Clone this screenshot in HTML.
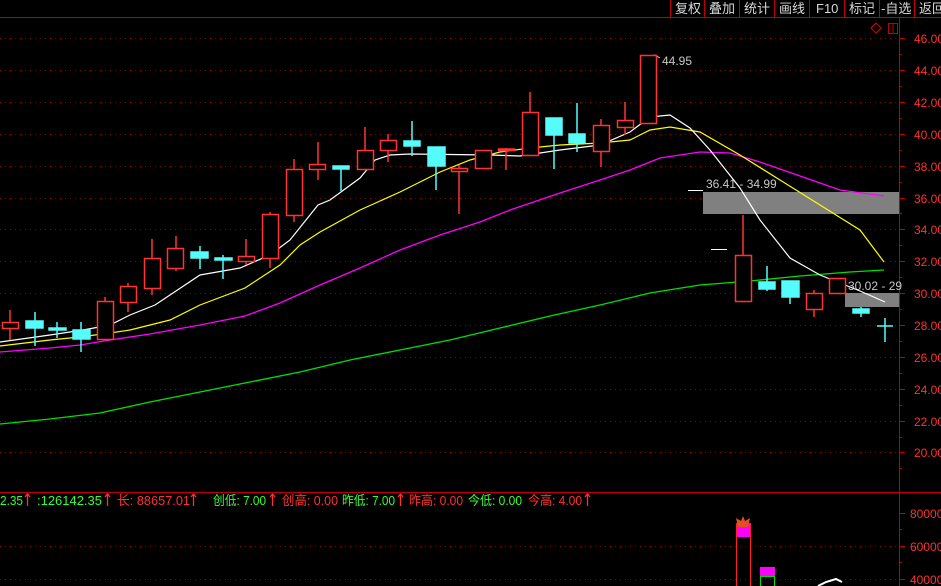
<!DOCTYPE html>
<html><head><meta charset="utf-8"><style>
body{margin:0;background:#000;width:941px;height:586px;overflow:hidden;font-family:"Liberation Sans","Noto Sans CJK SC",sans-serif}
svg{position:absolute;left:0;top:0}
text{font-family:"Liberation Sans","Noto Sans CJK SC",sans-serif}
</style></head><body>
<svg width="941" height="586" viewBox="0 0 941 586">
<line x1="0" y1="17.5" x2="941" y2="17.5" stroke="#c00000"/>
<g stroke="#c00000">
<line x1="670.5" y1="0" x2="670.5" y2="17"/><line x1="704.5" y1="0" x2="704.5" y2="17"/><line x1="739.5" y1="0" x2="739.5" y2="17"/><line x1="774.5" y1="0" x2="774.5" y2="17"/><line x1="809.5" y1="0" x2="809.5" y2="17"/><line x1="844.5" y1="0" x2="844.5" y2="17"/><line x1="879.5" y1="0" x2="879.5" y2="17"/><line x1="914.5" y1="0" x2="914.5" y2="17"/>
</g>
<g fill="#d8d8d8" font-size="13">
<text x="675" y="13">复权</text><text x="709" y="13">叠加</text><text x="744" y="13">统计</text><text x="779" y="13">画线</text><text x="816" y="13">F10</text><text x="849" y="13">标记</text><text x="881" y="13">-自选</text><text x="919" y="13">返回</text>
</g>
<polygon points="876,23 881,28 876,33 871,28" fill="none" stroke="#e00000"/>
<rect x="888.5" y="23.5" width="9" height="10" fill="none" stroke="#c00000"/><line x1="893" y1="23" x2="893" y2="34" stroke="#c00000"/>
<g stroke="#900000" stroke-dasharray="1,4">
<line x1="0" y1="38.5" x2="899" y2="38.5"/><line x1="0" y1="70.5" x2="899" y2="70.5"/><line x1="0" y1="102.5" x2="899" y2="102.5"/><line x1="0" y1="134.5" x2="899" y2="134.5"/><line x1="0" y1="166.5" x2="899" y2="166.5"/><line x1="0" y1="198.5" x2="899" y2="198.5"/><line x1="0" y1="229.5" x2="899" y2="229.5"/><line x1="0" y1="261.5" x2="899" y2="261.5"/><line x1="0" y1="293.5" x2="899" y2="293.5"/><line x1="0" y1="325.5" x2="899" y2="325.5"/><line x1="0" y1="357.5" x2="899" y2="357.5"/><line x1="0" y1="389.5" x2="899" y2="389.5"/><line x1="0" y1="421.5" x2="899" y2="421.5"/><line x1="0" y1="452.5" x2="899" y2="452.5"/>
<line x1="0" y1="546.5" x2="899" y2="546.5"/><line x1="0" y1="579.5" x2="899" y2="579.5"/>
</g>
<line x1="899.5" y1="18" x2="899.5" y2="586" stroke="#c00000"/>
<line x1="0" y1="492.5" x2="941" y2="492.5" stroke="#c00000"/>
<g stroke="#c00000">
<line x1="899" y1="38.5" x2="905" y2="38.5"/><line x1="899" y1="70.5" x2="905" y2="70.5"/><line x1="899" y1="102.5" x2="905" y2="102.5"/><line x1="899" y1="134.5" x2="905" y2="134.5"/><line x1="899" y1="166.5" x2="905" y2="166.5"/><line x1="899" y1="198.5" x2="905" y2="198.5"/><line x1="899" y1="229.5" x2="905" y2="229.5"/><line x1="899" y1="261.5" x2="905" y2="261.5"/><line x1="899" y1="293.5" x2="905" y2="293.5"/><line x1="899" y1="325.5" x2="905" y2="325.5"/><line x1="899" y1="357.5" x2="905" y2="357.5"/><line x1="899" y1="389.5" x2="905" y2="389.5"/><line x1="899" y1="421.5" x2="905" y2="421.5"/><line x1="899" y1="452.5" x2="905" y2="452.5"/>
<line x1="899" y1="54.5" x2="902" y2="54.5"/><line x1="899" y1="86.5" x2="902" y2="86.5"/><line x1="899" y1="118.5" x2="902" y2="118.5"/><line x1="899" y1="150.5" x2="902" y2="150.5"/><line x1="899" y1="182.5" x2="902" y2="182.5"/><line x1="899" y1="213.5" x2="902" y2="213.5"/><line x1="899" y1="245.5" x2="902" y2="245.5"/><line x1="899" y1="277.5" x2="902" y2="277.5"/><line x1="899" y1="309.5" x2="902" y2="309.5"/><line x1="899" y1="341.5" x2="902" y2="341.5"/><line x1="899" y1="373.5" x2="902" y2="373.5"/><line x1="899" y1="405.5" x2="902" y2="405.5"/><line x1="899" y1="437.5" x2="902" y2="437.5"/><line x1="899" y1="468.5" x2="902" y2="468.5"/>
<line x1="899" y1="513.5" x2="905" y2="513.5"/><line x1="899" y1="546.5" x2="905" y2="546.5"/><line x1="899" y1="579.5" x2="905" y2="579.5"/><line x1="899" y1="529.5" x2="902" y2="529.5"/><line x1="899" y1="562.5" x2="902" y2="562.5"/>
</g>
<g fill="#ff3030" font-size="12">
<text x="914" y="43">46.00</text><text x="914" y="75">44.00</text><text x="914" y="107">42.00</text><text x="914" y="139">40.00</text><text x="914" y="171">38.00</text><text x="914" y="203">36.00</text><text x="914" y="234">34.00</text><text x="914" y="266">32.00</text><text x="914" y="298">30.00</text><text x="914" y="330">28.00</text><text x="914" y="362">26.00</text><text x="914" y="394">24.00</text><text x="914" y="426">22.00</text><text x="914" y="457">20.00</text>
<text x="910" y="518">80000</text><text x="910" y="551">60000</text><text x="910" y="584">40000</text>
</g>
<rect x="703" y="192" width="196" height="22" fill="#808080"/>
<rect x="845" y="293" width="54" height="14" fill="#808080"/>
<line x1="688" y1="190.5" x2="703" y2="190.5" stroke="#fff"/>
<line x1="711" y1="249.5" x2="727" y2="249.5" stroke="#fff"/>
<g fill="#c8c8c8" font-size="12"><text x="706" y="188">36.41 - 34.99</text><text x="848" y="290">30.02 - 29</text><text x="662" y="65">44.95</text></g>
<path d="M650,56 L655,55 L660,58" stroke="#ccc" fill="none"/>
<polyline fill="none" stroke="#00e000" stroke-width="1.3" points="0,424 50,419 100,413 150,402 200,392 250,382 300,372 350,360 400,350 450,340 500,328 550,316 600,305 650,293 700,285 750,281 800,276 850,272 884,270"/>
<polyline fill="none" stroke="#ff00ff" stroke-width="1.3" points="0,352 50,348 80,345 110,340 150,334 200,325 245,316 280,303 320,285 360,268 400,250 440,235 480,222 510,210 560,193 600,180 630,170 660,158 700,152 730,153 760,162 800,176 840,190 884,196"/>
<polyline fill="none" stroke="#ffff00" stroke-width="1.2" points="0,346 50,340 80,337 110,333 130,330 170,320 200,305 245,288 280,265 300,245 320,232 360,210 400,192 440,172 470,160 500,152 530,148 560,145 600,143 630,140 650,130 670,127 700,132 740,155 780,180 820,205 860,230 884,262"/>
<polyline fill="none" stroke="#ffffff" stroke-width="1.2" points="0,342 50,335 83,330 110,325 130,315 155,305 200,275 240,268 270,255 290,240 318,205 330,200 360,178 375,160 390,155 410,154 490,155 520,156 560,150 600,145 630,132 650,117 670,115 690,128 710,150 740,188 760,220 790,258 820,275 840,283 860,291 885,302"/>
<g stroke="#ff3333" stroke-width="1.5" fill="#000">
<line x1="10" y1="310" x2="10" y2="340"/><rect x="2.5" y="322.5" width="16" height="6"/>
<line x1="105" y1="297" x2="105" y2="340"/><rect x="97.5" y="301.5" width="16" height="38"/>
<line x1="128" y1="283" x2="128" y2="312"/><rect x="120.5" y="286.5" width="16" height="16"/>
<line x1="152" y1="239" x2="152" y2="295"/><rect x="144.5" y="258.5" width="16" height="30"/>
<line x1="176" y1="236" x2="176" y2="271"/><rect x="167.5" y="248.5" width="16" height="20"/>
<line x1="246" y1="239" x2="246" y2="265"/><rect x="238.5" y="256.5" width="16" height="5"/>
<line x1="270" y1="212" x2="270" y2="268"/><rect x="262.5" y="214.5" width="16" height="44"/>
<line x1="294" y1="159" x2="294" y2="222"/><rect x="286.5" y="169.5" width="16" height="46"/>
<line x1="318" y1="142" x2="318" y2="180"/><rect x="309.5" y="164.5" width="16" height="5"/>
<line x1="365" y1="127" x2="365" y2="169"/><rect x="357.5" y="150.5" width="16" height="19"/>
<line x1="388" y1="134" x2="388" y2="162"/><rect x="380.5" y="140.5" width="16" height="10"/>
<line x1="459" y1="165" x2="459" y2="214"/><rect x="451.5" y="168.5" width="16" height="3"/>
<rect x="475.5" y="150.5" width="16" height="18"/>
<line x1="506" y1="148" x2="506" y2="170"/><rect x="498.5" y="149" width="16" height="1.5" fill="#ff3333"/>
<line x1="530" y1="92" x2="530" y2="155"/><rect x="522.5" y="112.5" width="16" height="43"/>
<line x1="601" y1="119" x2="601" y2="167"/><rect x="593.5" y="125.5" width="16" height="26"/>
<line x1="625" y1="102" x2="625" y2="135"/><rect x="617.5" y="120.5" width="16" height="7"/>
<rect x="640.5" y="55.5" width="16" height="68"/>
<line x1="743" y1="215" x2="743" y2="302"/><rect x="735.5" y="255.5" width="16" height="46"/>
<line x1="814" y1="290" x2="814" y2="317"/><rect x="806.5" y="293.5" width="16" height="16"/>
<rect x="829.5" y="278.5" width="16" height="15"/>
</g>
<g stroke="#54fcfc" stroke-width="1.5" fill="#54fcfc">
<line x1="35" y1="312" x2="35" y2="346"/><rect x="26" y="321" width="17" height="7"/>
<line x1="57" y1="322" x2="57" y2="338"/><rect x="49" y="328" width="17" height="2"/>
<line x1="81" y1="322" x2="81" y2="352"/><rect x="73" y="330" width="17" height="9"/>
<line x1="200" y1="246" x2="200" y2="269"/><rect x="191" y="252" width="17" height="6"/>
<line x1="223" y1="255" x2="223" y2="279"/><rect x="215" y="258" width="17" height="2"/>
<line x1="341" y1="166" x2="341" y2="191"/><rect x="333" y="166" width="16" height="3"/>
<line x1="412" y1="121" x2="412" y2="156"/><rect x="404" y="141" width="16" height="5"/>
<line x1="436" y1="166" x2="436" y2="190"/><rect x="428" y="147" width="17" height="19"/>
<line x1="554" y1="135" x2="554" y2="169"/><rect x="546" y="118" width="16" height="17"/>
<line x1="577" y1="103" x2="577" y2="152"/><rect x="569" y="134" width="16" height="9"/>
<line x1="767" y1="266" x2="767" y2="291"/><rect x="759" y="282" width="16" height="7"/>
<line x1="790" y1="297" x2="790" y2="304"/><rect x="782" y="281" width="17" height="16"/>
<line x1="861" y1="307" x2="861" y2="317"/><rect x="853" y="309" width="16" height="4"/>
<line x1="885" y1="318" x2="885" y2="342"/><line x1="877" y1="326" x2="893" y2="326"/>
</g>
<g font-size="13">
<text x="0" y="505" fill="#33ff33" textLength="23" lengthAdjust="spacingAndGlyphs">2.35</text>
<text x="37" y="505" fill="#33ff33" textLength="65" lengthAdjust="spacingAndGlyphs">:126142.35</text>
<text x="117" y="505" fill="#ff3030" textLength="73" lengthAdjust="spacingAndGlyphs">长: 88657.01</text>
<text x="213" y="505" fill="#33ff33" textLength="53" lengthAdjust="spacingAndGlyphs">创低: 7.00</text>
<text x="282" y="505" fill="#ff3030" textLength="56" lengthAdjust="spacingAndGlyphs">创高: 0.00</text>
<text x="342" y="505" fill="#33ff33" textLength="53" lengthAdjust="spacingAndGlyphs">昨低: 7.00</text>
<text x="409" y="505" fill="#ff3030" textLength="54" lengthAdjust="spacingAndGlyphs">昨高: 0.00</text>
<text x="468" y="505" fill="#33ff33" textLength="54" lengthAdjust="spacingAndGlyphs">今低: 0.00</text>
<text x="528" y="505" fill="#ff3030" textLength="54" lengthAdjust="spacingAndGlyphs">今高: 4.00</text>
</g>
<g stroke="#ff3030" stroke-width="1.3" fill="none">
<path d="M27.5,506 V494 M25,497 L27.5,494 L30,497"/>
<path d="M107.5,506 V494 M105,497 L107.5,494 L110,497"/>
<path d="M193.5,506 V494 M191,497 L193.5,494 L196,497"/>
<path d="M272.5,506 V494 M270,497 L272.5,494 L275,497"/>
<path d="M400.5,506 V494 M398,497 L400.5,494 L403,497"/>
<path d="M587.5,506 V494 M585,497 L587.5,494 L590,497"/>
</g>
<rect x="736.5" y="523.5" width="14" height="63" fill="none" stroke="#ff2020"/>
<rect x="737" y="524" width="13" height="13" fill="#ff00ff"/>
<path d="M736,518 L741,521 L743,516 L745,521 L750,518 L748,527 L738,527 Z" fill="#e05020"/>
<rect x="760.5" y="576.5" width="14" height="12" fill="none" stroke="#00e000"/>
<rect x="760" y="567" width="15" height="9" fill="#ff00ff"/>
<path d="M818,586 L826,582 L836,579 L842,582" stroke="#fff" stroke-width="2" fill="none"/>
</svg>
</body></html>
